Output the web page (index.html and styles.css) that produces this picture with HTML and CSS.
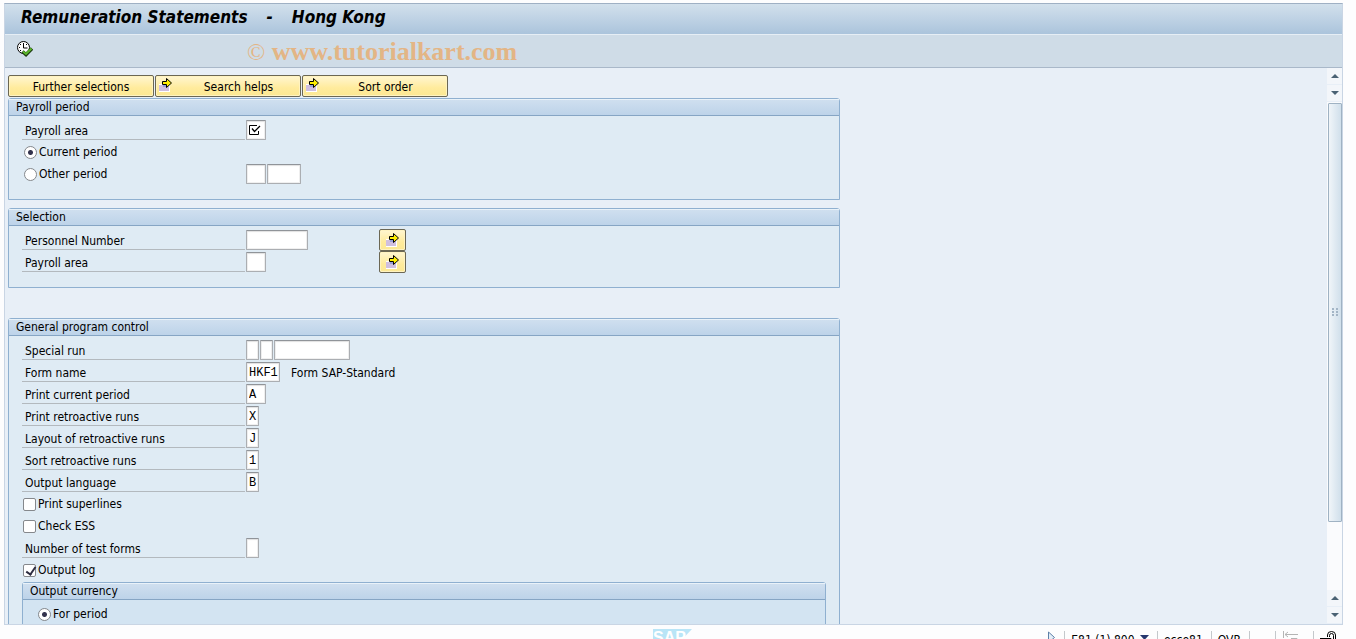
FILE: index.html
```html
<!DOCTYPE html>
<html lang="en">
<head>
    <meta charset="UTF-8">
    <meta name="viewport" content="width=device-width, initial-scale=1.0">
    <title>Remuneration Statements - Hong Kong</title>
    <link rel="stylesheet" href="styles.css">
</head>
<body>
    <svg width="0" height="0" class="sprite" aria-hidden="true">
        <symbol id="icon-arrow" viewBox="0 0 14 14">
            <rect x="0" y="6" width="11" height="8" fill="#fff"/>
            <rect x="0" y="7" width="10" height="6" fill="#d0bfe0"/>
            <rect x="4" y="7" width="4" height="2" fill="#9a9fd8"/>
            <path d="M3.500 3.500h4v-3l5 4.500-5 4.500v-3h-4z" fill="#ffee00" stroke="#000"/>
        </symbol>
    </svg>

    <div class="window">
        <header class="title-bar">
            <h1>Remuneration Statements</h1>
            <span>-</span>
            <span>Hong Kong</span>
        </header>

        <div class="toolbar">
            <button type="button" class="execute" aria-label="Execute">
                <svg width="16" height="16" viewBox="0 0 16 16">
                    <circle cx="6.500" cy="6.500" r="6" fill="#fff" stroke="#000"/>
                    <path d="M6.500 2v5h4M2 6.500h1M6.500 10v1M3 3.500h1M9 3.500h1M3 9.500h1" fill="none" stroke="#000"/>
                    <path d="M5.500 10.500l3.500 3 6-6" fill="none" stroke="#1d3b10" stroke-width="3.500"/>
                    <path d="M6 10.500l3 2.500 5.500-5.500" fill="none" stroke="#5cb82c" stroke-width="2"/>
                </svg>
            </button>
            <span class="watermark"><span class="copy">©</span> www.tutorialkart.com</span>
        </div>

        <main class="screen">
            <form class="content">
                <div class="buttons">
                    <button type="button" class="btn">Further selections</button>
                    <button type="button" class="btn with-icon"><svg width="14" height="14"><use href="#icon-arrow"/></svg>Search helps</button>
                    <button type="button" class="btn with-icon"><svg width="14" height="14"><use href="#icon-arrow"/></svg>Sort order</button>
                </div>

                <fieldset class="group">
                    <legend>Payroll period</legend>
                    <div class="row">
                        <label class="name" for="area">Payroll area</label>
                        <span class="required">
                            <input type="text" id="area" class="w2">
                            <svg width="12" height="12" viewBox="0 0 12 12">
                                <path d="M8 1.500H.5v9h9V7" fill="none" stroke="#000"/>
                                <path d="M3 4.500l2.500 3L11 2" fill="none" stroke="#000" stroke-width="1.300"/>
                            </svg>
                        </span>
                    </div>
                    <div class="row">
                        <label class="option"><input type="radio" name="period" checked>Current period</label>
                    </div>
                    <div class="row">
                        <label class="option"><input type="radio" name="period">Other period</label>
                        <input type="text" class="w2" aria-label="Period number">
                        <input type="text" class="w4" aria-label="Period year">
                    </div>
                </fieldset>

                <fieldset class="group">
                    <legend>Selection</legend>
                    <div class="row">
                        <label class="name" for="pernr">Personnel Number</label>
                        <span class="range"><input type="text" id="pernr" class="w8"></span>
                        <button type="button" class="btn multiple" aria-label="Multiple selection"><svg width="14" height="14"><use href="#icon-arrow"/></svg></button>
                    </div>
                    <div class="row">
                        <label class="name" for="abkrs">Payroll area</label>
                        <span class="range"><input type="text" id="abkrs" class="w2"></span>
                        <button type="button" class="btn multiple" aria-label="Multiple selection"><svg width="14" height="14"><use href="#icon-arrow"/></svg></button>
                    </div>
                </fieldset>

                <fieldset class="group program">
                    <legend>General program control</legend>
                    <div class="row">
                        <label class="name" for="special">Special run</label>
                        <input type="text" id="special" class="w1">
                        <input type="text" class="w1" aria-label="Run identifier">
                        <input type="text" class="w10" aria-label="Run date">
                    </div>
                    <div class="row">
                        <label class="name" for="form-name">Form name</label>
                        <input type="text" id="form-name" class="w4" value="HKF1">
                        <span class="info">Form SAP-Standard</span>
                    </div>
                    <div class="row">
                        <label class="name" for="current">Print current period</label>
                        <input type="text" id="current" class="w2" value="A">
                    </div>
                    <div class="row">
                        <label class="name" for="retro">Print retroactive runs</label>
                        <input type="text" id="retro" class="w1" value="X">
                    </div>
                    <div class="row">
                        <label class="name" for="layout">Layout of retroactive runs</label>
                        <input type="text" id="layout" class="w1" value="J">
                    </div>
                    <div class="row">
                        <label class="name" for="sort">Sort retroactive runs</label>
                        <input type="text" id="sort" class="w1" value="1">
                    </div>
                    <div class="row">
                        <label class="name" for="language">Output language</label>
                        <input type="text" id="language" class="w1" value="B">
                    </div>
                    <div class="row">
                        <label class="option"><input type="checkbox">Print superlines</label>
                    </div>
                    <div class="row">
                        <label class="option"><input type="checkbox">Check ESS</label>
                    </div>
                    <div class="row">
                        <label class="name" for="tests">Number of test forms</label>
                        <input type="text" id="tests" class="w1">
                    </div>
                    <div class="row">
                        <label class="option"><input type="checkbox" checked>Output log</label>
                    </div>
                    <fieldset class="group inner">
                        <legend>Output currency</legend>
                        <div class="row">
                            <label class="option"><input type="radio" name="currency" checked>For period</label>
                        </div>
                    </fieldset>
                </fieldset>
            </form>

            <div class="scrollbar">
                <button type="button" aria-label="Scroll up"><i class="up"></i></button>
                <button type="button" aria-label="Scroll down"><i class="down"></i></button>
                <div class="track">
                    <div class="thumb">
                        <svg width="7" height="9" viewBox="0 0 7 9" fill="#a3b5c6">
                            <path d="M0 0h2v2H0zM4 0h2v2H4zM0 3h2v2H0zM4 3h2v2H4zM0 6h2v2H0zM4 6h2v2H4z"/>
                        </svg>
                    </div>
                </div>
                <button type="button" aria-label="Page up"><i class="up"></i></button>
                <button type="button" aria-label="Page down"><i class="down"></i></button>
            </div>
        </main>
    </div>

    <footer class="status-bar">
        <div class="brand">
            <svg width="40" height="20" viewBox="0 0 40 20" aria-label="SAP">
                <path d="M0 0h39L20 20H0z" fill="#b9e5f7"/>
                <text x="0" y="14" class="logo-text">SAP</text>
            </svg>
        </div>
        <div class="status">
            <svg width="9" height="13" viewBox="0 0 9 13"><path d="M1.500 1v10.500l6-5z" fill="#e4eef8" stroke="#5d80a8"/></svg>
            <span class="cell system">E81 (1) 800 <svg width="9" height="5" viewBox="0 0 9 5"><path d="M0 0h9L4.500 5z" fill="#25366e"/></svg></span>
            <span class="cell server">ecce81</span>
            <span class="cell mode">OVR</span>
            <span class="cell blank"></span>
            <span class="cell back">
                <svg width="17" height="12" viewBox="0 0 17 12" fill="none" stroke="#b4b4b4"><path d="M1.500 0v7M3 3.500h13M6 1L3 3.500 6 6M9 7.500h6v4"/></svg>
            </span>
            <span class="cell lock">
                <svg width="17" height="14" viewBox="0 0 17 14" fill="none" stroke="#000"><path d="M7.500 6V4q0-3.500 4-3.500t4 3.500v4M9.500 6V4.500q0-2 2-2t2 2V8M0 7.500h11v6H0"/></svg>
            </span>
        </div>
    </footer>
</body>
</html>
```

FILE: styles.css
```css
* {
    margin: 0;
    padding: 0;
    box-sizing: border-box;
}

body {
    display: flex;
    flex-direction: column;
    height: 100vh;
    overflow: hidden;
    padding-top: 3px;
    background: #fdfdfe;
    font-family: 'DejaVu Sans Condensed', 'DejaVu Sans', sans-serif;
    font-size: 12px;
    color: #000;
}

button, input {
    font: inherit;
    color: inherit;
}

.sprite {
    position: absolute;
}

.window {
    display: flex;
    flex-direction: column;
    flex: 1;
    min-height: 0;
    margin: 0 13px 0 4px;
    border: 1px solid #c9d5e4;
    border-top-color: #9fb0c4;
    background: #e8eff7;
}

.title-bar {
    display: flex;
    gap: 19px;
    height: 31px;
    padding-left: 16px;
    line-height: 27px;
    background: linear-gradient(#d2e0ec, #abc4dc);
    border-bottom: 1px solid #e6eef5;
    font-size: 17px;
    font-weight: bold;
    font-style: italic;
}

.title-bar h1 {
    font-size: 17px;
}

.toolbar {
    display: flex;
    align-items: center;
    height: 33px;
    padding-left: 12px;
    background: #cfdce7;
    border-bottom: 1px solid #a9b8c9;
}

.execute {
    width: 16px;
    height: 16px;
    margin-bottom: 4px;
    border: none;
    background: none;
}

.execute svg {
    display: block;
}

.watermark {
    margin-left: 214px;
    padding-top: 2px;
    font-family: 'Liberation Serif', serif;
    font-size: 26px;
    font-weight: bold;
    color: #e3b585;
}

.copy {
    font-size: 24px;
    font-weight: normal;
}

.screen {
    display: flex;
    flex: 1;
    min-height: 0;
}

.content {
    flex: 1;
    overflow: hidden;
    padding: 7px 3px 0;
}

.buttons {
    display: flex;
    gap: 1px;
    margin-bottom: 1px;
}

.btn {
    width: 146px;
    height: 22px;
    padding-top: 1px;
    line-height: 20px;
    border: 1px solid #6b6754;
    border-radius: 2px;
    background: linear-gradient(#fff6d2, #ffeb9c 60%, #fce893);
    box-shadow: inset 0 0 0 1px #fff3c0;
}

.with-icon {
    position: relative;
    padding-left: 21px;
}

.with-icon svg {
    position: absolute;
    left: 3px;
    top: 2px;
}

.group {
    max-width: 832px;
    margin-bottom: 8px;
    padding-bottom: 14px;
    border: 1px solid #8fb0d0;
    border-radius: 3px 3px 0 0;
    background: #dfebf4;
}

.group legend {
    float: left;
    width: 100%;
    height: 17px;
    margin-bottom: 3px;
    padding-left: 7px;
    line-height: 14px;
    background: linear-gradient(#cfdfef, #bdd3e9);
    border-top: 1px solid #e9f2f9;
    border-bottom: 1px solid #86a5c4;
}

.program {
    margin-top: 30px;
}

.row {
    display: flex;
    clear: both;
    align-items: flex-start;
    gap: 1px;
    height: 22px;
    padding: 1px 0 0 13px;
}

.name, .option {
    width: 223px;
    height: 20px;
    line-height: 22px;
}

.name {
    padding-left: 3px;
    border-bottom: 1px solid #b3b9be;
}

.option {
    display: flex;
    align-items: center;
}

input[type="text"] {
    height: 20px;
    padding: 1px 0 0 2px;
    border: 1px solid #abaeb2;
    border-top-color: #909499;
    border-radius: 1px;
    background: #fff;
    box-shadow: inset 0 1px 1px #e2e2e2, inset 0 0 0 1px #f0f0f0;
    font-family: 'Liberation Mono', monospace;
    font-size: 12px;
}

.w1 {
    width: 13px;
}

.w2 {
    width: 20px;
}

.w4 {
    width: 34px;
}

.w8 {
    width: 62px;
}

.w10 {
    width: 76px;
}

.required {
    position: relative;
}

.required svg {
    position: absolute;
    left: 3px;
    top: 4px;
}

.range {
    width: 132px;
}

.multiple {
    width: 27px;
    margin-top: -1px;
}

.multiple svg {
    display: block;
    margin: 0 auto 2px;
}

.info {
    padding-left: 10px;
    line-height: 22px;
}

input[type="radio"], input[type="checkbox"] {
    appearance: none;
    flex: none;
    width: 13px;
    height: 13px;
    margin: 0 2px 0 1px;
    border: 1px solid #85888c;
    background: #fff;
}

input[type="radio"] {
    margin-left: 2px;
    border-radius: 50%;
}

input[type="radio"]:checked {
    background: radial-gradient(circle, #33334d 2px, #fff 3px);
}

input[type="checkbox"] {
    border-radius: 2px;
}

input[type="checkbox"]:checked::before {
    content: "";
    display: block;
    width: 4px;
    height: 8px;
    margin: 0 0 0 4px;
    border: solid #2c2c40;
    border-width: 0 2px 2px 0;
    transform: rotate(35deg);
}

.inner {
    clear: both;
    margin: 1px 13px 0;
    background: #d3e4f2;
}

.scrollbar {
    display: flex;
    flex-direction: column;
    width: 15px;
    background: #fafbfd;
}

.scrollbar button {
    display: flex;
    align-items: center;
    justify-content: center;
    height: 17px;
    border: none;
    border-bottom: 1px solid #e8eff7;
    background: #f3f6fa;
}

.up, .down {
    display: inline-block;
    border: 4px solid transparent;
}

.up {
    border-top: none;
    border-bottom: 4px solid #4a6274;
}

.down {
    border-bottom: none;
    border-top: 4px solid #4a6274;
}

.track {
    flex: 1;
    padding: 1px 0 0 1px;
}

.thumb {
    display: flex;
    align-items: center;
    justify-content: center;
    height: 86%;
    border: 1px solid #9fb2c3;
    border-radius: 1px;
    background: linear-gradient(90deg, #f0f5f9, #d0dfeb);
}

.status-bar {
    display: flex;
    align-items: flex-start;
    flex: none;
    height: 14px;
    padding: 4px 19px 0 653px;
    overflow: hidden;
}

.brand {
    flex: 1;
}

.logo-text {
    font-family: 'Liberation Sans', sans-serif;
    font-size: 16px;
    font-weight: bold;
    fill: #fff;
}

.status {
    display: flex;
    padding-top: 2px;
}

.cell {
    height: 20px;
    margin-left: 8px;
    padding-left: 6px;
    line-height: 18px;
    border-left: 1px solid #c4c8cc;
}

.cell svg {
    vertical-align: top;
}

.system svg {
    margin: 4px 0 0 2px;
}

.blank {
    width: 18px;
}

.back {
    padding-right: 6px;
}
```
